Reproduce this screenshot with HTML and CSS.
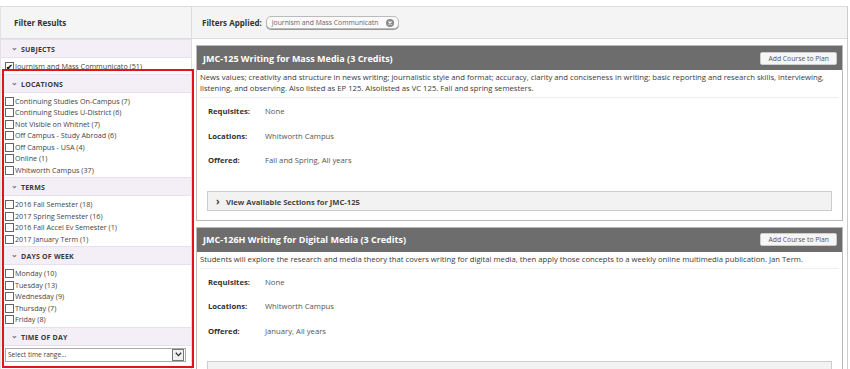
FILE: index.html
```html
<!DOCTYPE html>
<html lang="en">
<head>
    <meta charset="UTF-8">
    <title>Course Catalog</title>
    <link rel="stylesheet" href="styles.css">
</head>
<body>
    <div class="page">
        <!-- sidebar filters -->
        <div class="sidebar">
            <div class="filter-title">Filter Results</div>

            <div class="facet-head"><span class="chev">&#8964;</span>Subjects</div>
            <ul class="facet-list">
                <li><span class="box checked">&#10004;</span>Journism and Mass Communicato (51)</li>
            </ul>

            <div class="facet-head"><span class="chev">&#8964;</span>Locations</div>
            <ul class="facet-list">
                <li><span class="box"></span>Continuing Studies On-Campus (7)</li>
                <li><span class="box"></span>Continuing Studies U-District (6)</li>
                <li><span class="box"></span>Not Visible on Whitnet (7)</li>
                <li><span class="box"></span>Off Campus - Study Abroad (6)</li>
                <li><span class="box"></span>Off Campus - USA (4)</li>
                <li><span class="box"></span>Online (1)</li>
                <li><span class="box"></span>Whitworth Campus (37)</li>
            </ul>

            <div class="facet-head"><span class="chev">&#8964;</span>Terms</div>
            <ul class="facet-list">
                <li><span class="box"></span>2016 Fall Semester (18)</li>
                <li><span class="box"></span>2017 Spring Semester (16)</li>
                <li><span class="box"></span>2016 Fall Accel Ev Semester (1)</li>
                <li><span class="box"></span>2017 January Term (1)</li>
            </ul>

            <div class="facet-head"><span class="chev">&#8964;</span>Days of Week</div>
            <ul class="facet-list">
                <li><span class="box"></span>Monday (10)</li>
                <li><span class="box"></span>Tuesday (13)</li>
                <li><span class="box"></span>Wednesday (9)</li>
                <li><span class="box"></span>Thursday (7)</li>
                <li><span class="box"></span>Friday (8)</li>
            </ul>

            <div class="facet-head"><span class="chev">&#8964;</span>Time of Day</div>
            <div class="select">
                <span>Select time range...</span>
                <span class="select-btn">
                    <svg width="7" height="5" viewBox="0 0 7 5"><path d="M0.8 0.8 L3.5 3.6 L6.2 0.8" fill="none" stroke="#333" stroke-width="1.3"/></svg>
                </span>
            </div>

            <div class="highlight"></div>
        </div>

        <!-- results -->
        <div class="main">
            <div class="filters-bar">
                <b>Filters Applied:</b>
                <span class="chip">Journism and Mass Communicatn
                    <svg width="8" height="8" viewBox="0 0 8 8"><circle cx="4" cy="4" r="4" fill="#8a8a8a"/><path d="M2.5 2.5 L5.5 5.5 M5.5 2.5 L2.5 5.5" stroke="#fff" stroke-width="1.1"/></svg>
                </span>
            </div>

            <div class="card">
                <div class="card-head">
                    <span class="card-title">JMC-125 Writing for Mass Media (3 Credits)</span>
                    <button class="add-btn">Add Course to Plan</button>
                </div>
                <p class="desc">News values; creativity and structure in news writing; journalistic style and format; accuracy, clarity and conciseness in writing; basic reporting and research skills, interviewing, listening, and observing. Also listed as EP 125. Alsolisted as VC 125. Fall and spring semesters.</p>
                <table class="details">
                    <tr><th>Requisites:</th><td>None</td></tr>
                    <tr><th>Locations:</th><td>Whitworth Campus</td></tr>
                    <tr><th>Offered:</th><td>Fall and Spring, All years</td></tr>
                </table>
                <div class="sections"><span class="arrow">&#8250;</span>View Available Sections for JMC-125</div>
            </div>

            <div class="card">
                <div class="card-head">
                    <span class="card-title">JMC-126H Writing for Digital Media (3 Credits)</span>
                    <button class="add-btn">Add Course to Plan</button>
                </div>
                <p class="desc">Students will explore the research and media theory that covers writing for digital media, then apply those concepts to a weekly online multimedia publication. Jan Term.</p>
                <table class="details">
                    <tr><th>Requisites:</th><td>None</td></tr>
                    <tr><th>Locations:</th><td>Whitworth Campus</td></tr>
                    <tr><th>Offered:</th><td>January, All years</td></tr>
                </table>
                <div class="sections"><span class="arrow">&#8250;</span>View Available Sections for JMC-126H</div>
            </div>
        </div>
    </div>
</body>
</html>
```

FILE: styles.css
```css
body {
    margin: 0;
    padding-top: 6px;
    font-family: 'Open Sans', 'Noto Sans', Arial, sans-serif;
    color: #333;
    background: #fff;
    overflow: hidden;
}
.page {
    display: flex;
    width: 847px;
    height: 400px;
    border-top: 1px solid #ddd;
    border-right: 1px solid #ccc;
}

/* sidebar */
.sidebar {
    position: relative;
    width: 190px;
    flex-shrink: 0;
    border-left: 1px solid #e2e2e2;
    border-right: 1px solid #ddd;
}
.filter-title {
    height: 31px;
    line-height: 31px;
    padding-left: 13px;
    font-size: 8px;
    font-weight: bold;
    background: #f5f5f5;
    border-bottom: 1px solid #ddd;
}
.facet-head {
    height: 17px;
    line-height: 17px;
    padding-left: 10px;
    font-size: 7px;
    font-weight: bold;
    text-transform: uppercase;
    letter-spacing: 0.2px;
    background: #f4eef7;
    border-top: 1px solid #e8e0ee;
    border-bottom: 1px solid #e8e0ee;
    color: #3a3a3a;
}
.chev {
    display: inline-block;
    width: 10px;
    font-size: 8px;
    position: relative;
    top: -2px;
    color: #777;
}
.facet-list {
    list-style: none;
    margin: 0;
    padding: 3px 0 1px 4px;
}
.facet-list li {
    height: 11.5px;
    line-height: 11.5px;
    font-size: 7.2px;
    color: #444;
    white-space: nowrap;
    display: flex;
    align-items: center;
}
.box {
    width: 7px;
    height: 7px;
    border: 1px solid #666;
    background: #fff;
    flex-shrink: 0;
    margin-right: 1px;
    font-size: 8px;
    line-height: 7px;
    color: #111;
    text-align: center;
}
.box.checked {
    font-weight: bold;
}
.select {
    display: flex;
    align-items: center;
    justify-content: space-between;
    margin: 2px 5px 0 4px;
    height: 12px;
    border: 1px solid #aaa;
    font-size: 6.6px;
    color: #444;
    padding-left: 2px;
}
.select-btn {
    width: 10px;
    height: 10px;
    border: 1px solid #777;
    margin-right: 1px;
    display: flex;
    align-items: center;
    justify-content: center;
    background: #f0f0f0;
}
.highlight {
    position: absolute;
    left: 1px;
    top: 62px;
    width: 188px;
    height: 295px;
    border: 2px solid #e3131d;
}

/* results */
.main {
    flex: 1;
    padding-bottom: 20px;
}
.filters-bar {
    height: 31px;
    display: flex;
    align-items: center;
    padding-left: 10px;
    background: #f4f4f4;
    border-bottom: 1px solid #ddd;
    font-size: 8px;
}
.filters-bar b {
    margin-right: 4px;
}
.chip {
    display: inline-flex;
    align-items: center;
    gap: 8px;
    height: 11px;
    padding: 0 4px 0 5px;
    border: 1px solid #bbb;
    border-radius: 5px;
    background: #fafafa;
    font-size: 6.8px;
    color: #666;
    box-shadow: 0 1px 0 #999;
}
.card {
    margin: 6px 4px 6px 4px;
    border: 1px solid #bbb;
    padding-bottom: 9px;
}
.card-head {
    height: 24px;
    display: flex;
    align-items: center;
    justify-content: space-between;
    padding: 0 5px 0 6px;
    background: #6d6d6d;
}
.card-title {
    color: #fff;
    font-weight: bold;
    font-size: 9px;
}
.add-btn {
    font-family: inherit;
    font-size: 6.8px;
    color: #555;
    background: #f6f6f6;
    border: 1px solid #ccc;
    border-radius: 2px;
    height: 13px;
    padding: 0 7px;
}
.desc {
    margin: 0 3px;
    padding: 2px 0 3px 0;
    font-size: 7.7px;
    line-height: 11px;
    color: #3a3a3a;
    border-bottom: 1px solid #eee;
}
.details {
    border-collapse: collapse;
    margin: 1px 0 18px 11px;
    font-size: 7.7px;
}
.details th {
    text-align: left;
    font-weight: bold;
    width: 57px;
    height: 24.5px;
    padding: 0;
    color: #333;
}
.details td {
    color: #555;
    padding: 0;
}
.sections {
    margin: 0 10px;
    height: 18px;
    line-height: 18px;
    background: #f2f2f2;
    border: 1px solid #ccc;
    font-size: 7.6px;
    font-weight: bold;
    color: #444;
    padding-left: 8px;
}
.arrow {
    display: inline-block;
    width: 10px;
    font-size: 10px;
}
```
